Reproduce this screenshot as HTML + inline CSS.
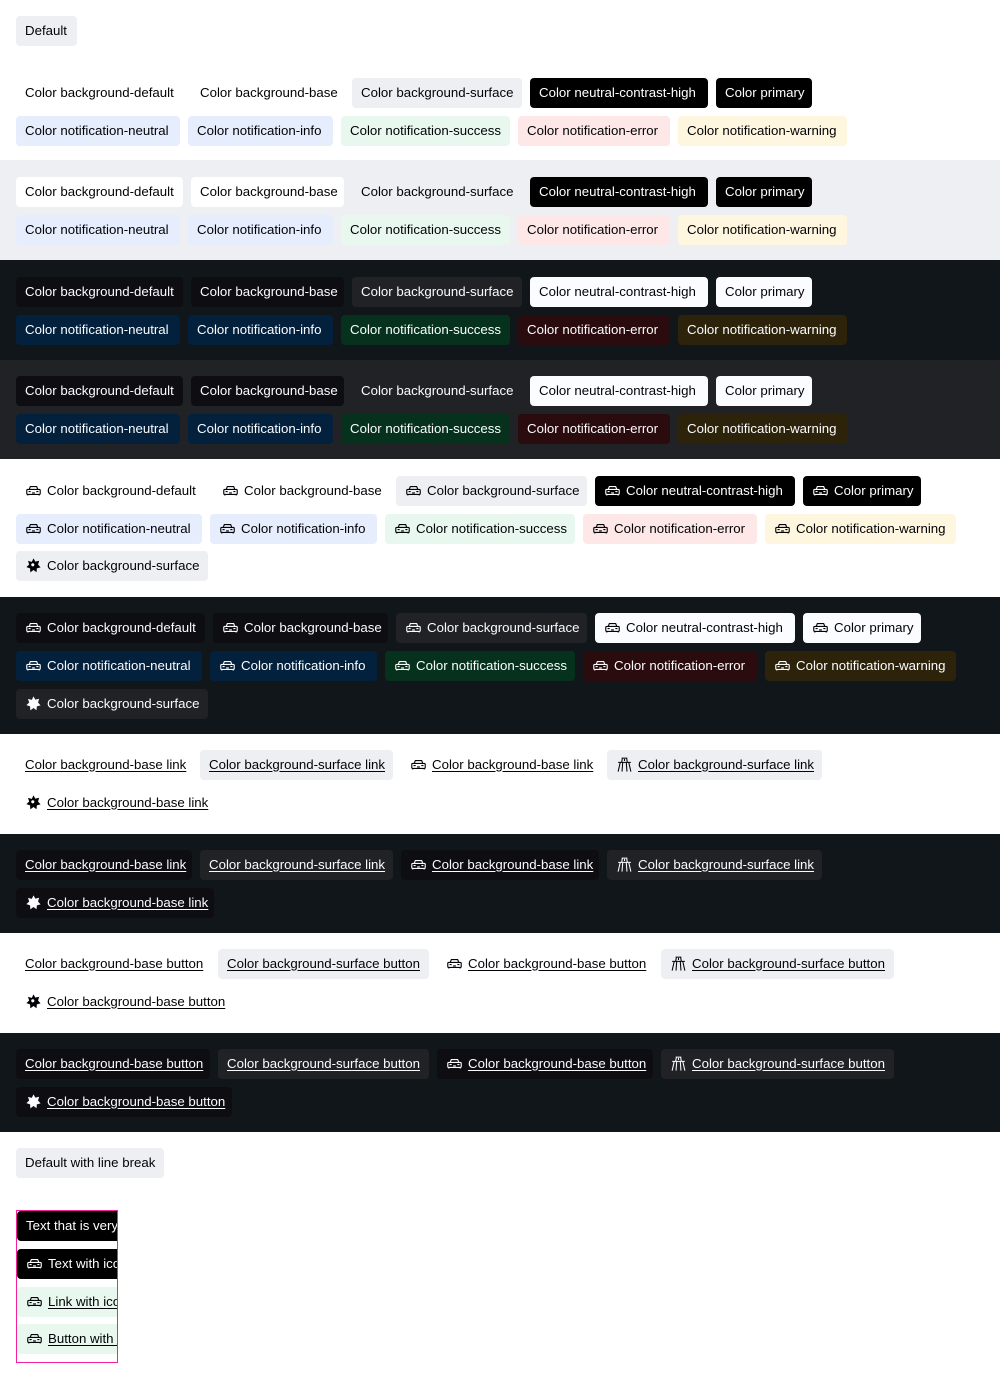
<!DOCTYPE html>
<html><head><meta charset="utf-8">
<style>
*{box-sizing:border-box;margin:0;padding:0}
body{width:1000px;height:1379px;background:#fff;font-family:"Liberation Sans",sans-serif;font-size:13.25px;color:#010205;overflow:hidden}
.s{position:absolute;left:0;width:1000px}
.r{position:absolute;left:16px;display:flex;gap:8px}
.t{display:inline-flex;align-items:center;height:30px;padding:0 9px 2px;border-radius:4px;white-space:nowrap;overflow:hidden;flex:none}
.t svg{width:17px;height:17px;margin-right:5px;flex:none}
.u{text-decoration:underline;text-underline-offset:2px}
.L .d,.L .b{background:#fff}.L .f{background:#eeeff2}.L .c,.L .p{background:#000;color:#fff}
.L .n,.L .i{background:#e6edfd}.L .g{background:#e9f8ee}.L .e{background:#fde7e7}.L .w{background:#fff6e0}
.D{color:#fbfcff}
.D .d,.D .b{background:#0e0e12}.D .f{background:#212225}.D .c,.D .p{background:#fbfcff;color:#010205}
.D .n,.D .i{background:#03203c}.D .g{background:#06321d}.D .e{background:#2a0b0e}.D .w{background:#2c230a}
.bw .d,.bw .b{background:transparent}
</style></head><body>
<svg width="0" height="0" style="position:absolute">
<symbol id="car" viewBox="0 0 24 24"><g fill="none" stroke="currentColor" stroke-width="1.6" stroke-linejoin="round"><path d="M6 10.5 L7.5 6.5 H16.5 L18 10.5"/><rect x="2.5" y="10.5" width="19" height="7" rx="1.5"/><path d="M4 17.5v1.5M20 17.5v1.5M5 13.5h3M16 13.5h3M10 15.5h4"/></g></symbol>
<symbol id="star" viewBox="0 0 24 24"><path fill="currentColor" d="M12 2l2.6 4.6 5.4-1.3-1.6 5.2L22 14.6l-5.3 1.4-.4 5.5L12 18.3 7.5 21.7l-.3-5.6L2 14.3l3.9-3.7-1.7-5.2 5.4 1.5z"/><circle cx="11" cy="11" r="2.2" fill="#fff"/></symbol>
<symbol id="road" viewBox="0 0 24 24"><g fill="none" stroke="currentColor" stroke-width="1.5"><path d="M8 3h8M3 9h18M6 9 3 22M18 9l3 13M9.5 9 8.5 22M14.5 9l1 13M9 3 8 9M15 3l1 6M12 4v3"/></g></symbol>
</svg>

<div class="s L" style="top:0;height:160px;">
<div class="r" style="top:16px"><span class="t f" style="width:61px">Default</span></div>
<div class="r bw" style="top:78px"><span class="t d" style="width:167px">Color background-default</span><span class="t b" style="width:153px">Color background-base</span><span class="t f" style="width:170px">Color background-surface</span><span class="t c" style="width:178px">Color neutral-contrast-high</span><span class="t p" style="width:96px">Color primary</span></div>
<div class="r" style="top:116px"><span class="t n" style="width:164px">Color notification-neutral</span><span class="t i" style="width:145px">Color notification-info</span><span class="t g" style="width:169px">Color notification-success</span><span class="t e" style="width:152px">Color notification-error</span><span class="t w" style="width:169px">Color notification-warning</span></div>
</div>

<div class="s L" style="top:160px;height:100px;background:#eeeff2">
<div class="r" style="top:17px"><span class="t d" style="width:167px">Color background-default</span><span class="t b" style="width:153px">Color background-base</span><span class="t f" style="width:170px">Color background-surface</span><span class="t c" style="width:178px">Color neutral-contrast-high</span><span class="t p" style="width:96px">Color primary</span></div>
<div class="r" style="top:55px"><span class="t n" style="width:164px">Color notification-neutral</span><span class="t i" style="width:145px">Color notification-info</span><span class="t g" style="width:169px">Color notification-success</span><span class="t e" style="width:152px">Color notification-error</span><span class="t w" style="width:169px">Color notification-warning</span></div>
</div>

<div class="s D" style="top:260px;height:100px;background:#11161a">
<div class="r" style="top:17px"><span class="t d" style="width:167px">Color background-default</span><span class="t b" style="width:153px">Color background-base</span><span class="t f" style="width:170px">Color background-surface</span><span class="t c" style="width:178px">Color neutral-contrast-high</span><span class="t p" style="width:96px">Color primary</span></div>
<div class="r" style="top:55px"><span class="t n" style="width:164px">Color notification-neutral</span><span class="t i" style="width:145px">Color notification-info</span><span class="t g" style="width:169px">Color notification-success</span><span class="t e" style="width:152px">Color notification-error</span><span class="t w" style="width:169px">Color notification-warning</span></div>
</div>

<div class="s D" style="top:360px;height:99px;background:#212225">
<div class="r" style="top:16px"><span class="t d" style="width:167px">Color background-default</span><span class="t b" style="width:153px">Color background-base</span><span class="t f" style="width:170px">Color background-surface</span><span class="t c" style="width:178px">Color neutral-contrast-high</span><span class="t p" style="width:96px">Color primary</span></div>
<div class="r" style="top:54px"><span class="t n" style="width:164px">Color notification-neutral</span><span class="t i" style="width:145px">Color notification-info</span><span class="t g" style="width:169px">Color notification-success</span><span class="t e" style="width:152px">Color notification-error</span><span class="t w" style="width:169px">Color notification-warning</span></div>
</div>

<div class="s L" style="top:459px;height:138px;">
<div class="r bw" style="top:17px"><span class="t d" style="width:189px"><svg><use href="#car"/></svg>Color background-default</span><span class="t b" style="width:175px"><svg><use href="#car"/></svg>Color background-base</span><span class="t f" style="width:191px"><svg><use href="#car"/></svg>Color background-surface</span><span class="t c" style="width:200px"><svg><use href="#car"/></svg>Color neutral-contrast-high</span><span class="t p" style="width:118px"><svg><use href="#car"/></svg>Color primary</span></div>
<div class="r" style="top:55px"><span class="t n" style="width:186px"><svg><use href="#car"/></svg>Color notification-neutral</span><span class="t i" style="width:167px"><svg><use href="#car"/></svg>Color notification-info</span><span class="t g" style="width:190px"><svg><use href="#car"/></svg>Color notification-success</span><span class="t e" style="width:174px"><svg><use href="#car"/></svg>Color notification-error</span><span class="t w" style="width:191px"><svg><use href="#car"/></svg>Color notification-warning</span></div>
<div class="r" style="top:92px"><span class="t f" style="width:192px"><svg><use href="#star"/></svg>Color background-surface</span></div>
</div>

<div class="s D" style="top:597px;height:137px;background:#11161a">
<div class="r" style="top:16px"><span class="t d" style="width:189px"><svg><use href="#car"/></svg>Color background-default</span><span class="t b" style="width:175px"><svg><use href="#car"/></svg>Color background-base</span><span class="t f" style="width:191px"><svg><use href="#car"/></svg>Color background-surface</span><span class="t c" style="width:200px"><svg><use href="#car"/></svg>Color neutral-contrast-high</span><span class="t p" style="width:118px"><svg><use href="#car"/></svg>Color primary</span></div>
<div class="r" style="top:54px"><span class="t n" style="width:186px"><svg><use href="#car"/></svg>Color notification-neutral</span><span class="t i" style="width:167px"><svg><use href="#car"/></svg>Color notification-info</span><span class="t g" style="width:190px"><svg><use href="#car"/></svg>Color notification-success</span><span class="t e" style="width:174px"><svg><use href="#car"/></svg>Color notification-error</span><span class="t w" style="width:191px"><svg><use href="#car"/></svg>Color notification-warning</span></div>
<div class="r" style="top:92px"><span class="t f" style="width:192px"><svg><use href="#star"/></svg>Color background-surface</span></div>
</div>

<div class="s L bw" style="top:734px;height:100px;">
<div class="r" style="top:16px"><span class="t b u" style="width:176px">Color background-base link</span><span class="t f u" style="width:193px">Color background-surface link</span><span class="t b u" style="width:198px"><svg><use href="#car"/></svg>Color background-base link</span><span class="t f u" style="width:215px"><svg><use href="#road"/></svg>Color background-surface link</span></div>
<div class="r" style="top:54px"><span class="t b u" style="width:198px"><svg><use href="#star"/></svg>Color background-base link</span></div>
</div>

<div class="s D" style="top:834px;height:99px;background:#11161a">
<div class="r" style="top:16px"><span class="t b u" style="width:176px">Color background-base link</span><span class="t f u" style="width:193px">Color background-surface link</span><span class="t b u" style="width:198px"><svg><use href="#car"/></svg>Color background-base link</span><span class="t f u" style="width:215px"><svg><use href="#road"/></svg>Color background-surface link</span></div>
<div class="r" style="top:54px"><span class="t b u" style="width:198px"><svg><use href="#star"/></svg>Color background-base link</span></div>
</div>

<div class="s L bw" style="top:933px;height:100px;">
<div class="r" style="top:16px"><span class="t b u" style="width:194px">Color background-base button</span><span class="t f u" style="width:211px">Color background-surface button</span><span class="t b u" style="width:216px"><svg><use href="#car"/></svg>Color background-base button</span><span class="t f u" style="width:233px"><svg><use href="#road"/></svg>Color background-surface button</span></div>
<div class="r" style="top:54px"><span class="t b u" style="width:216px"><svg><use href="#star"/></svg>Color background-base button</span></div>
</div>

<div class="s D" style="top:1033px;height:99px;background:#11161a">
<div class="r" style="top:16px"><span class="t b u" style="width:194px">Color background-base button</span><span class="t f u" style="width:211px">Color background-surface button</span><span class="t b u" style="width:216px"><svg><use href="#car"/></svg>Color background-base button</span><span class="t f u" style="width:233px"><svg><use href="#road"/></svg>Color background-surface button</span></div>
<div class="r" style="top:54px"><span class="t b u" style="width:216px"><svg><use href="#star"/></svg>Color background-base button</span></div>
</div>

<div class="s L" style="top:1132px;height:247px;">
<div class="r" style="top:16px"><span class="t f" style="width:148px">Default with line break</span></div>
<div style="position:absolute;left:16px;top:78px;width:102px;height:153px;border:1px solid #f5209b;overflow:hidden">
<div class="t c" style="position:absolute;left:0;top:0;width:120px">Text that is very long</div>
<div class="t c" style="position:absolute;left:0;top:38px;width:120px"><svg><use href="#car"/></svg>Text with icon</div>
<div class="t g u" style="position:absolute;left:0;top:76px;width:120px"><svg><use href="#car"/></svg>Link with icon</div>
<div class="t g u" style="position:absolute;left:0;top:113px;width:120px"><svg><use href="#car"/></svg>Button with icon</div>
</div>
</div>
</body></html>
